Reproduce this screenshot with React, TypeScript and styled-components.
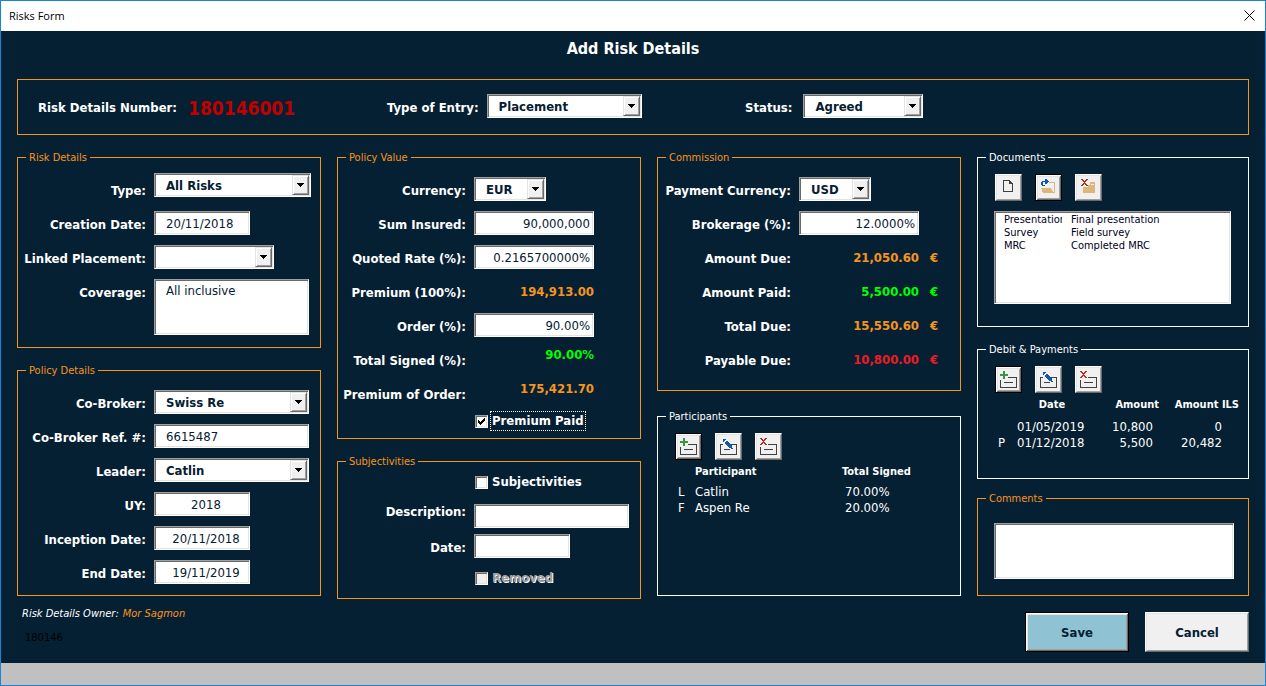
import React from "react";
import styled, { createGlobalStyle, css } from "styled-components";

const navy = "#062033";
const orange = "#f7941d";
const green = "#00ff00";
const red = "#ed1c24";

const GlobalStyle = createGlobalStyle`
  *, *::before, *::after { box-sizing: border-box; }
  body { margin: 0; }
  body, input, select, textarea, button {
    font-family: "DejaVu Sans Condensed", "DejaVu Sans", Tahoma, Verdana, sans-serif;
    font-stretch: condensed;
    font-size: 13px;
  }
`;

const sunken = css`
  border: 1px solid;
  border-color: #a0a0a0 #ffffff #ffffff #a0a0a0;
  border-radius: 0;
  box-shadow: inset 1px 1px #696969, inset -1px -1px #e3e3e3;
  background: #ffffff;
  color: ${navy};
  outline: none;
  margin: 0;
`;

const raised = css`
  border: 1px solid;
  border-color: #ffffff #696969 #696969 #ffffff;
  border-radius: 0;
  box-shadow: inset 1px 1px #e3e3e3, inset -1px -1px #a0a0a0;
  background: #f0f0f0;
`;

const Window = styled.div`
  display: flex;
  flex-direction: column;
  min-height: 100vh;
  border: 1px solid #1883d7;
  background: ${navy};
  color: #ffffff;
`;

const TitleBar = styled.header`
  display: flex;
  align-items: center;
  justify-content: space-between;
  height: 30px;
  padding: 0 10px 2px 8px;
  background: #ffffff;
  color: #000000;
  font-family: "Open Sans", "Noto Sans", sans-serif;
  font-stretch: normal;
  font-size: 11px;
`;

const CloseButton = styled.button`
  display: flex;
  padding: 0;
  border: 0;
  background: none;
`;

const Form = styled.form`
  flex: 1;
  padding: 0 16px;
`;

const Heading = styled.h1`
  margin: 0 0 12px;
  text-align: center;
  font-size: 16px;
  line-height: 36px;
`;

const Summary = styled.section`
  display: grid;
  grid-template-columns: 349fr 358fr 503fr;
  align-items: center;
  height: 56px;
  margin-bottom: 16px;
  padding-left: 20px;
  border: 1px solid ${orange};
`;

const SummaryItem = styled.div<{ $gap?: number }>`
  display: flex;
  align-items: center;
  gap: ${(p) => p.$gap ?? 8}px;
  white-space: nowrap;
`;

const RiskNumber = styled.output`
  padding-top: 2px;
  color: #c00000;
  font-size: 19px;
  font-weight: bold;
`;

const Columns = styled.div`
  display: grid;
  grid-template-columns: 304fr 304fr 304fr 272fr;
  column-gap: 16px;
`;

const Column = styled.div`
  min-width: 0;
`;

const Panel = styled.fieldset<{ $tone?: string; $gap?: number; $top?: number; $bottom?: number; $height?: number }>`
  min-width: 0;
  min-height: ${(p) => (p.$height ? `${p.$height}px` : "0")};
  margin: ${(p) => p.$gap ?? 0}px 0 0;
  padding: ${(p) => p.$top ?? 9}px 0 ${(p) => p.$bottom ?? 0}px;
  border: 1px solid ${(p) => p.$tone ?? orange};
`;

const Legend = styled.legend<{ $tone?: string }>`
  height: 13px;
  margin-left: 8px;
  padding: 0 3px;
  color: ${(p) => p.$tone ?? orange};
  font-size: 11px;
  line-height: 13px;
`;

const Row = styled.div<{ $label?: number; $height?: number; $align?: string }>`
  display: grid;
  grid-template-columns: ${(p) => p.$label ?? 128}px auto;
  column-gap: 8px;
  justify-content: start;
  align-items: center;
  height: ${(p) => p.$height ?? 34}px;

  > :nth-child(2) {
    align-self: ${(p) => p.$align ?? "center"};
  }
`;

const Label = styled.label`
  padding-top: 2px;
  text-align: right;
  font-size: 13px;
  font-weight: bold;
  line-height: 16px;
  white-space: nowrap;
`;

const TallRow = styled(Row)`
  height: auto;
  align-items: start;

  > label {
    line-height: 34px;
    padding-top: 1px;
  }
`;

const TextBox = styled.input<{ $w: number; $align?: string }>`
  ${sunken}
  width: ${(p) => p.$w}px;
  height: 24px;
  margin-bottom: 2px;
  padding: ${(p) => (p.$align === "right" ? "0 3px" : p.$align === "center" ? "0 0 0 8px" : "0 11px")};
  text-align: ${(p) => p.$align ?? "left"};
`;

const TextArea = styled.textarea<{ $w?: number }>`
  ${sunken}
  display: block;
  width: ${(p) => (p.$w ? `${p.$w}px` : "auto")};
  height: 56px;
  margin-top: 4px;
  padding: 3px 11px;
  line-height: 16px;
  resize: none;
`;

const CommentBox = styled(TextArea)`
  width: calc(100% - 30px);
  margin: 9px 14px 0 16px;
`;

const ComboFrame = styled.div<{ $w: number }>`
  position: relative;
  width: ${(p) => p.$w}px;
  height: 24px;
  margin-bottom: 2px;
`;

const ComboSelect = styled.select`
  ${sunken}
  appearance: none;
  display: block;
  width: 100%;
  height: 24px;
  padding: 0 20px 0 11px;
  font-weight: bold;
`;

const ComboArrow = styled.span`
  ${raised}
  border-color: #e3e3e3 #696969 #696969 #e3e3e3;
  box-shadow: inset 1px 1px #ffffff, inset -1px -1px #a0a0a0;
  position: absolute;
  top: 2px;
  right: 2px;
  display: flex;
  align-items: center;
  justify-content: center;
  width: 17px;
  height: 20px;
  pointer-events: none;
`;

const Amount = styled.output<{ $tone?: string }>`
  display: flex;
  gap: 11px;
  color: ${(p) => p.$tone ?? orange};
  font-weight: bold;
  line-height: 24px;

  > span:first-child {
    width: 120px;
    text-align: right;
  }
`;

const CheckRow = styled.div<{ $gap?: number }>`
  display: flex;
  align-items: center;
  height: 20px;
  margin-top: ${(p) => p.$gap ?? 0}px;
  padding-left: 137px;
`;

const CheckFrame = styled.span`
  position: relative;
  display: flex;
  width: 13px;
  height: 13px;

  > svg {
    position: absolute;
    inset: 0;
    pointer-events: none;
  }
`;

const CheckBox = styled.input`
  ${sunken}
  appearance: none;
  width: 13px;
  height: 13px;

  &:disabled {
    background: #f0f0f0;
  }
`;

const CheckLabel = styled.label<{ $focused?: boolean; $disabled?: boolean }>`
  margin-left: 2px;
  padding: 0 1px;
  border: 1px dotted ${(p) => (p.$focused ? "#ffffff" : "transparent")};
  font-weight: bold;
  line-height: 18px;
  ${(p) => p.$disabled && css`
    color: #a0a0a0;
    text-shadow: 1px 1px #ffffff;
  `}
`;

const Toolbar = styled.div`
  display: flex;
  gap: 13px;
  padding-left: 17px;
`;

const ToolButton = styled.button<{ $default?: boolean }>`
  ${raised}
  width: 27px;
  height: 27px;
  padding: 0;
  ${(p) => p.$default && css`
    border-color: #000000;
    box-shadow: inset 1px 1px #ffffff, inset -1px -1px #696969, inset 2px 2px #e3e3e3, inset -2px -2px #a0a0a0;
  `}

  > svg {
    display: block;
    margin: -1px;
  }
`;

const Listing = styled.table<{ $head: number }>`
  table-layout: fixed;
  margin-left: 17px;
  border-collapse: collapse;
  line-height: 16px;

  th, td { padding: 0; text-align: left; white-space: nowrap; }
  th { height: ${(p) => p.$head}px; padding-top: 4px; vertical-align: top; font-size: 11px; }
`;

const Flag = styled.td`
  && { padding-left: 3px; }
`;

const Percent = styled.td`
  && { padding-left: 3px; }
`;

const HeadCell = styled.th<{ $align: string }>`
  && { text-align: ${(p) => p.$align}; }
`;

const NumberCell = styled.td<{ $pad: number }>`
  && { padding-right: ${(p) => p.$pad}px; text-align: right; }
`;

const DocumentBox = styled.div`
  ${sunken}
  height: 93px;
  margin: 10px 17px 0 16px;
  padding: 1px 9px;
`;

const DocumentTable = styled.table`
  width: 100%;
  table-layout: fixed;
  border-collapse: collapse;
  color: #000020;
  font-size: 11px;
  line-height: 13px;

  td { padding: 0; overflow: hidden; white-space: nowrap; }
  td:first-child { width: 58px; }
  td:last-child { padding-left: 9px; }
`;

const Footer = styled.footer`
  display: flex;
  justify-content: space-between;
  align-items: flex-start;
  padding-bottom: 11px;
`;

const Owner = styled.div`
  padding: 3px 0 0 5px;
  font-size: 11px;
  line-height: 24px;
`;

const OwnerLine = styled.div`
  font-style: italic;

  > span { margin-left: 4px; color: ${orange}; }
`;

const RecordId = styled.div`
  padding-left: 3px;
  color: #000000;
`;

const Actions = styled.div`
  display: flex;
  gap: 16px;
  margin-top: 13px;
`;

const ActionButton = styled.button<{ $primary?: boolean }>`
  ${raised}
  width: 104px;
  height: 40px;
  color: ${navy};
  font-weight: bold;
  ${(p) => p.$primary && css`
    border-color: #000000;
    background: #8fc3d4;
    box-shadow: inset 1px 1px #ffffff, inset -1px -1px #696969, inset 2px 2px #e3e3e3, inset -2px -2px #a0a0a0;
  `}
`;

const StatusStrip = styled.div`
  height: 22px;
  background: #c0c0c0;
`;

function Combo({ id, value, width }: { id: string; value: string; width: number }) {
  return (
    <ComboFrame $w={width}>
      <ComboSelect id={id} defaultValue={value}>
        <option>{value}</option>
      </ComboSelect>
      <ComboArrow>
        <svg width="7" height="4" shapeRendering="crispEdges">
          <path d="M0 0h7v1h-7zM1 1h5v1h-5zM2 2h3v1h-3zM3 3h1v1h-1z" fill="#000" />
        </svg>
      </ComboArrow>
    </ComboFrame>
  );
}

type IconName = "add" | "edit" | "remove" | "file" | "open" | "discard";

function Icon({ name }: { name: IconName }) {
  const cross = "M0 0h2v1h1v1h1v-1h1v-1h2v1h-1v1h-1v1h-1v1h1v1h1v1h1v1h-2v-1h-1v-1h-1v1h-1v1h-2v-1h1v-1h1v-1h1v-1h-1v-1h-1v-1h-1z";
  return (
    <svg width="27" height="27" viewBox="0 0 27 27" shapeRendering="crispEdges">
      {name === "add" && (
        <>
          <path d="M5 14h1v7h15v-9h-8v-1h9v11h-17zM9 16h9v1h-9z" fill="#404040" />
          <path d="M8 5h2v3h3v2h-3v3h-2v-3h-3v-2h3z" fill="#3c9440" />
        </>
      )}
      {name === "edit" && (
        <>
          <path d="M5 11h3v1h-2v9h15v-9h-6v-1h7v11h-17zM9 16h6v1h-6z" fill="#404040" />
          <path
            d="M8 6h3v1h-1v1h-1v1h-1zM11 8h2v1h1v1h1v1h1v1h1v3h-3v-1h-1v-1h-1v-1h-1v-1h-1v-2h1zM16 15h2v1h-2z"
            fill="#1059a8"
          />
        </>
      )}
      {name === "remove" && (
        <>
          <path d="M5 14h1v7h15v-9h-8v-1h9v11h-17zM9 16h9v1h-9z" fill="#404040" />
          <path d={cross} transform="translate(5 5)" fill="#b03020" />
        </>
      )}
      {name === "file" && (
        <path d="M8 6h7v1h1v1h1v1h1v9h-10zM9 7v10h8v-7h-3v-3z" fillRule="evenodd" fill="#404040" />
      )}
      {name === "open" && (
        <>
          <path d="M14 8h6v11h-1v-10h-5z" fill="#dcb67a" />
          <path d="M6 14h10l3 5h-11z" fill="#dcb67a" />
          <path d="M10 5h2v1h1v1h1v1h-1v1h-1v1h-2v-2h-2v3h2v1h-3v-1h-1v-3h1v-1h3z" fill="#1059a8" />
        </>
      )}
      {name === "discard" && (
        <>
          <path d="M15 8h5v11h-12v-6h5v-2h2zM16 10v1h3v-1z" fillRule="evenodd" fill="#dcb67a" />
          <path d={cross} transform="translate(6 5)" fill="#b03020" />
        </>
      )}
    </svg>
  );
}

function Tools({ items, primary }: { items: [IconName, string][]; primary: number }) {
  return (
    <Toolbar>
      {items.map(([name, label], i) => (
        <ToolButton key={name} type="button" aria-label={label} $default={i === primary}>
          <Icon name={name} />
        </ToolButton>
      ))}
    </Toolbar>
  );
}

function Value({ id, children, tone, euro }: { id: string; children: string; tone?: string; euro?: boolean }) {
  return (
    <Amount id={id} $tone={tone}>
      <span>{children}</span>
      {euro && <span>€</span>}
    </Amount>
  );
}

export default function App() {
  return (
    <>
      <GlobalStyle />
      <Window>
        <TitleBar>
          <span>Risks Form</span>
          <CloseButton type="button" aria-label="Close">
            <svg width="11" height="11" viewBox="0 0 11 11">
              <path d="M.5 .5l10 10M10.500 .5l-10 10" stroke="#000" fill="none" />
            </svg>
          </CloseButton>
        </TitleBar>
        <Form onSubmit={(e) => e.preventDefault()}>
          <Heading>Add Risk Details</Heading>
          <Summary>
            <SummaryItem $gap={11}>
              <Label htmlFor="number">Risk Details Number:</Label>
              <RiskNumber id="number">180146001</RiskNumber>
            </SummaryItem>
            <SummaryItem>
              <Label htmlFor="entry">Type of Entry:</Label>
              <Combo id="entry" value="Placement" width={155} />
            </SummaryItem>
            <SummaryItem $gap={11}>
              <Label htmlFor="status">Status:</Label>
              <Combo id="status" value="Agreed" width={120} />
            </SummaryItem>
          </Summary>

          <Columns>
            <Column>
              <Panel $bottom={12}>
                <Legend>Risk Details</Legend>
                <Row $align="start">
                  <Label htmlFor="type">Type:</Label>
                  <Combo id="type" value="All Risks" width={157} />
                </Row>
                <Row>
                  <Label htmlFor="created">Creation Date:</Label>
                  <TextBox id="created" $w={96} defaultValue="20/11/2018" />
                </Row>
                <Row>
                  <Label htmlFor="linked">Linked Placement:</Label>
                  <Combo id="linked" value="" width={120} />
                </Row>
                <TallRow>
                  <Label htmlFor="coverage">Coverage:</Label>
                  <TextArea id="coverage" $w={155} defaultValue="All inclusive" />
                </TallRow>
              </Panel>
              <Panel $gap={16} $bottom={5}>
                <Legend>Policy Details</Legend>
                <Row>
                  <Label htmlFor="cobroker">Co-Broker:</Label>
                  <Combo id="cobroker" value="Swiss Re" width={155} />
                </Row>
                <Row>
                  <Label htmlFor="ref">Co-Broker Ref. #:</Label>
                  <TextBox id="ref" $w={155} defaultValue="6615487" />
                </Row>
                <Row>
                  <Label htmlFor="leader">Leader:</Label>
                  <Combo id="leader" value="Catlin" width={155} />
                </Row>
                <Row>
                  <Label htmlFor="uy">UY:</Label>
                  <TextBox id="uy" $w={96} $align="center" defaultValue="2018" />
                </Row>
                <Row>
                  <Label htmlFor="inception">Inception Date:</Label>
                  <TextBox id="inception" $w={96} $align="center" defaultValue="20/11/2018" />
                </Row>
                <Row>
                  <Label htmlFor="end">End Date:</Label>
                  <TextBox id="end" $w={96} $align="center" defaultValue="19/11/2019" />
                </Row>
              </Panel>
            </Column>

            <Column>
              <Panel $bottom={7}>
                <Legend>Policy Value</Legend>
                <Row>
                  <Label htmlFor="currency">Currency:</Label>
                  <Combo id="currency" value="EUR" width={72} />
                </Row>
                <Row>
                  <Label htmlFor="sum">Sum Insured:</Label>
                  <TextBox id="sum" $w={120} $align="right" defaultValue="90,000,000" />
                </Row>
                <Row>
                  <Label htmlFor="rate">Quoted Rate (%):</Label>
                  <TextBox id="rate" $w={120} $align="right" defaultValue="0.2165700000%" />
                </Row>
                <Row>
                  <Label htmlFor="premium">Premium (100%):</Label>
                  <Value id="premium">194,913.00</Value>
                </Row>
                <Row>
                  <Label htmlFor="order">Order (%):</Label>
                  <TextBox id="order" $w={120} $align="right" defaultValue="90.00%" />
                </Row>
                <Row $align="start">
                  <Label htmlFor="signed">Total Signed (%):</Label>
                  <Value id="signed" tone={green}>90.00%</Value>
                </Row>
                <Row $align="start">
                  <Label htmlFor="orderPremium">Premium of Order:</Label>
                  <Value id="orderPremium">175,421.70</Value>
                </Row>
                <CheckRow>
                  <CheckFrame>
                    <CheckBox id="paid" type="checkbox" defaultChecked />
                    <svg width="13" height="13" shapeRendering="crispEdges">
                      <path d="M3 5h1v1h1v1h1v-1h1v-1h1v-1h1v-1h1v3h-1v1h-1v1h-1v1h-1v1h-1v-1h-1v-1h-1z" fill="#000" />
                    </svg>
                  </CheckFrame>
                  <CheckLabel htmlFor="paid" $focused>Premium Paid</CheckLabel>
                </CheckRow>
              </Panel>
              <Panel $gap={16} $top={4} $bottom={10}>
                <Legend>Subjectivities</Legend>
                <CheckRow>
                  <CheckBox id="subject" type="checkbox" />
                  <CheckLabel htmlFor="subject">Subjectivities</CheckLabel>
                </CheckRow>
                <Row $height={38} $align="end">
                  <Label htmlFor="description">Description:</Label>
                  <TextBox id="description" $w={155} />
                </Row>
                <Row>
                  <Label htmlFor="date">Date:</Label>
                  <TextBox id="date" $w={96} />
                </Row>
                <CheckRow $gap={4}>
                  <CheckBox id="removed" type="checkbox" disabled />
                  <CheckLabel htmlFor="removed" $disabled>Removed</CheckLabel>
                </CheckRow>
              </Panel>
            </Column>

            <Column>
              <Panel $bottom={13}>
                <Legend>Commission</Legend>
                <Row $label={133}>
                  <Label htmlFor="payCurrency">Payment Currency:</Label>
                  <Combo id="payCurrency" value="USD" width={72} />
                </Row>
                <Row $label={133}>
                  <Label htmlFor="brokerage">Brokerage (%):</Label>
                  <TextBox id="brokerage" $w={120} $align="right" defaultValue="12.0000%" />
                </Row>
                <Row $label={133}>
                  <Label htmlFor="due">Amount Due:</Label>
                  <Value id="due" euro>21,050.60</Value>
                </Row>
                <Row $label={133}>
                  <Label htmlFor="amountPaid">Amount Paid:</Label>
                  <Value id="amountPaid" tone={green} euro>5,500.00</Value>
                </Row>
                <Row $label={133}>
                  <Label htmlFor="total">Total Due:</Label>
                  <Value id="total" euro>15,550.60</Value>
                </Row>
                <Row $label={133}>
                  <Label htmlFor="payable">Payable Due:</Label>
                  <Value id="payable" tone={red} euro>10,800.00</Value>
                </Row>
              </Panel>
              <Panel $tone="#ffffff" $gap={19} $top={10} $height={186}>
                <Legend $tone="#ffffff">Participants</Legend>
                <Tools primary={0} items={[["add", "Add participant"], ["edit", "Edit participant"], ["remove", "Remove participant"]]} />
                <Listing $head={24}>
                  <colgroup><col width="20" /><col width="147" /><col width="80" /></colgroup>
                  <thead>
                    <tr><th /><th>Participant</th><th>Total Signed</th></tr>
                  </thead>
                  <tbody>
                    <tr><Flag>L</Flag><td>Catlin</td><Percent>70.00%</Percent></tr>
                    <tr><Flag>F</Flag><td>Aspen Re</td><Percent>20.00%</Percent></tr>
                  </tbody>
                </Listing>
              </Panel>
            </Column>

            <Column>
              <Panel $tone="#ffffff" $top={10} $bottom={22}>
                <Legend $tone="#ffffff">Documents</Legend>
                <Tools primary={1} items={[["file", "New document"], ["open", "Open document"], ["discard", "Delete document"]]} />
                <DocumentBox>
                  <DocumentTable>
                    <tbody>
                      <tr><td>Presentation</td><td>Final presentation</td></tr>
                      <tr><td>Survey</td><td>Field survey</td></tr>
                      <tr><td>MRC</td><td>Completed MRC</td></tr>
                    </tbody>
                  </DocumentTable>
                </DocumentBox>
              </Panel>
              <Panel $tone="#ffffff" $gap={16} $top={10} $height={136}>
                <Legend $tone="#ffffff">Debit &amp; Payments</Legend>
                <Tools primary={0} items={[["add", "Add payment"], ["edit", "Edit payment"], ["remove", "Remove payment"]]} />
                <Listing $head={26}>
                  <colgroup><col width="22" /><col width="70" /><col width="72" /><col width="80" /></colgroup>
                  <thead>
                    <tr>
                      <th />
                      <HeadCell $align="center">Date</HeadCell>
                      <HeadCell $align="right">Amount</HeadCell>
                      <HeadCell $align="right">Amount ILS</HeadCell>
                    </tr>
                  </thead>
                  <tbody>
                    <tr><Flag /><td>01/05/2019</td><NumberCell $pad={6}>10,800</NumberCell><NumberCell $pad={17}>0</NumberCell></tr>
                    <tr><Flag>P</Flag><td>01/12/2018</td><NumberCell $pad={6}>5,500</NumberCell><NumberCell $pad={17}>20,482</NumberCell></tr>
                  </tbody>
                </Listing>
              </Panel>
              <Panel $gap={13} $bottom={16}>
                <Legend>Comments</Legend>
                <CommentBox aria-label="Comments" />
              </Panel>
            </Column>
          </Columns>

          <Footer>
            <Owner>
              <OwnerLine>Risk Details Owner:<span>Mor Sagmon</span></OwnerLine>
              <RecordId>180146</RecordId>
            </Owner>
            <Actions>
              <ActionButton $primary type="submit">Save</ActionButton>
              <ActionButton type="button">Cancel</ActionButton>
            </Actions>
          </Footer>
        </Form>
        <StatusStrip />
      </Window>
    </>
  );
}
